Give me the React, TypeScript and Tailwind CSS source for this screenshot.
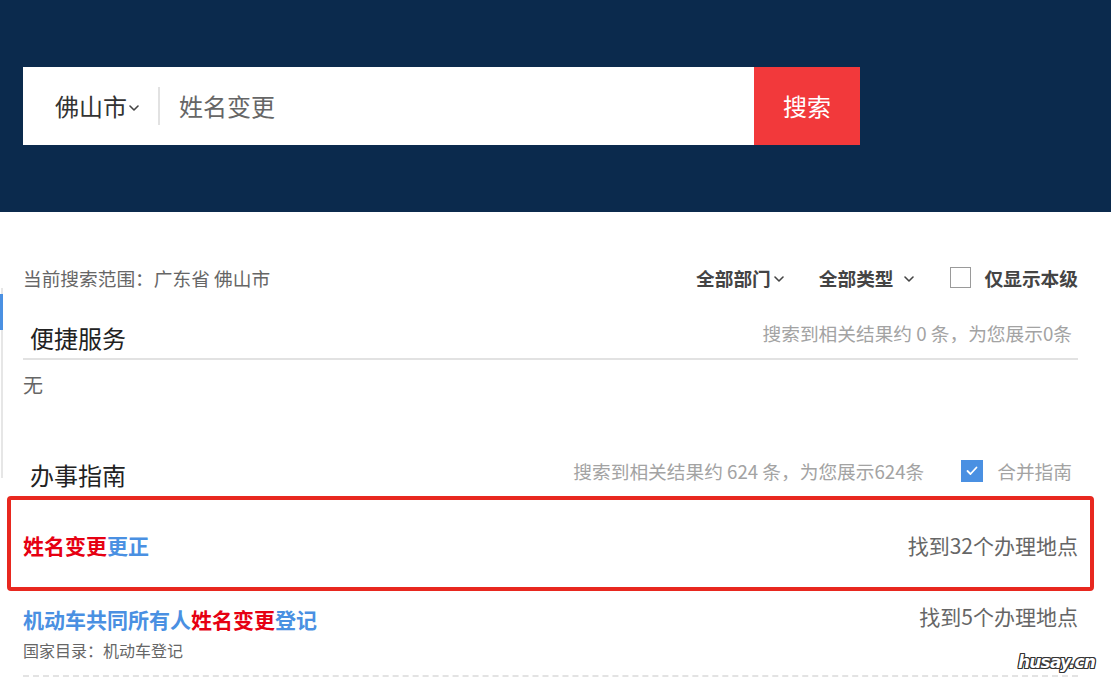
import React from "react";

const Chevron = ({ className = "" }: { className?: string }) => (
  <svg viewBox="0 0 10 6" className={className} fill="none" stroke="currentColor" strokeWidth="1.6" strokeLinecap="round" strokeLinejoin="round">
    <polyline points="1,1 5,5 9,1" />
  </svg>
);

export default function App() {
  const font = { fontFamily: '"Noto Sans CJK SC", "Noto Sans", sans-serif' };
  return (
    <div className="relative w-[1111px] h-[682px] overflow-hidden bg-white" style={font}>
      {/* Header */}
      <div className="h-[212px] bg-[#0b2a4d] pt-[67px] pl-[23px]">
        <div className="flex h-[78px] w-[837px]">
          <div className="flex flex-1 items-center bg-white">
            <div className="flex items-center pl-[32px] pr-[19px] text-[24px] text-[#333]">
              <span>佛山市</span>
              <Chevron className="ml-[2px] mt-[3px] w-[10px] h-[6px] text-[#444]" />
            </div>
            <div className="h-[38px] w-[2px] bg-[#e2e2e2]" />
            <div className="pl-[19px] text-[24px] text-[#666]">姓名变更</div>
          </div>
          <div className="flex w-[106px] items-center justify-center bg-[#f2393b] text-[24px] text-white">搜索</div>
        </div>
      </div>

      {/* Content */}
      <div className="relative pl-[23px] pr-[33px] pt-[51px]">
        <div className="absolute left-[1px] top-[76px] h-[190px] w-[2px] bg-[#e6e6e6]" />
        <div className="absolute left-[0px] top-[82px] h-[36px] w-[3px] bg-[#4a90e2]" />

        {/* filter row */}
        <div className="flex h-[30px] items-center justify-between text-[18.7px]">
          <div className="text-[#666]">当前搜索范围：广东省 佛山市</div>
          <div className="flex items-center font-bold text-[#444]">
            <span>全部部门</span>
            <Chevron className="ml-[3px] mt-[2px] w-[10px] h-[6px]" />
            <span className="ml-[35px]">全部类型</span>
            <Chevron className="ml-[10px] mt-[2px] w-[10px] h-[6px]" />
            <span className="ml-[36px] h-[21px] w-[21px] border-[1.5px] border-[#9a9a9a] bg-white" />
            <span className="ml-[14px]">仅显示本级</span>
          </div>
        </div>

        {/* 便捷服务 */}
        <div className="mt-[25px] flex h-[42px] items-center justify-between border-b-2 border-[#e2e2e2]">
          <div className="pl-[7px] text-[24px] text-[#222]">便捷服务</div>
          <div className="mb-[10px] pr-[6px] text-[18.7px] text-[#a3a3a3]">搜索到相关结果约 0 条，为您展示0条</div>
        </div>
        <div className="mt-[12px] text-[20px] leading-[26px] text-[#666]">无</div>

        {/* 办事指南 */}
        <div className="mt-[56px] flex h-[42px] items-center justify-between">
          <div className="pl-[7px] text-[24px] text-[#222]">办事指南</div>
          <div className="mb-[8px] flex items-center text-[18.7px] text-[#a3a3a3]">
            <span>搜索到相关结果约 624 条，为您展示624条</span>
            <span className="ml-[37px] flex h-[22px] w-[22px] items-center justify-center bg-[#4a90e2]">
              <svg viewBox="0 0 12 10" className="w-[12px] h-[10px]" fill="none" stroke="white" strokeWidth="1.8" strokeLinecap="round" strokeLinejoin="round">
                <polyline points="1.5,5 4.5,8 10.5,1.5" />
              </svg>
            </span>
            <span className="ml-[14px] pr-[6px]">合并指南</span>
          </div>
        </div>

        {/* highlighted item */}
        <div className="-mx-[16px] flex h-[95px] items-center justify-between rounded-[4px] border-4 border-[#e8281f] px-[12px] pt-[5px] text-[21px]">
          <div className="font-bold">
            <span className="text-[#e60012]">姓名变更</span>
            <span className="text-[#4a90e2]">更正</span>
          </div>
          <div className="text-[#666]">找到32个办理地点</div>
        </div>

        {/* item 2 */}
        <div className="flex justify-between border-b-2 border-dashed border-[#e3e3e3] pt-[14px] pb-[14px]">
          <div>
            <div className="text-[21px] leading-[28px] font-bold">
              <span className="text-[#4a90e2]">机动车共同所有人</span>
              <span className="text-[#e60012]">姓名变更</span>
              <span className="text-[#4a90e2]">登记</span>
            </div>
            <div className="mt-[6px] text-[16px] leading-[22px] text-[#666]">国家目录：机动车登记</div>
          </div>
          <div className="-mt-[3px] text-[21px] leading-[28px] text-[#666]">找到5个办理地点</div>
        </div>
      </div>

      {/* watermark */}
      <div
        className="absolute left-[1018px] top-[650px] text-[17px] font-bold italic text-white [text-shadow:1px_0_0_#333,-1px_0_0_#333,0_1px_0_#333,0_-1px_0_#333,1px_1px_0_#333,-1px_-1px_0_#333,1px_-1px_0_#333,-1px_1px_0_#333]"
        style={{ fontFamily: '"DejaVu Sans", sans-serif', letterSpacing: "-0.8px" }}
      >
        husay.cn
      </div>
    </div>
  );
}
